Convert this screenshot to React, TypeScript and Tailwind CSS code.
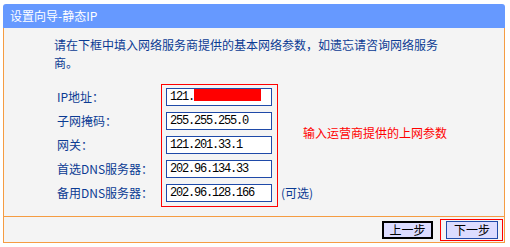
const fields = [
  { label: "IP地址：", value: "121.", masked: true },
  { label: "子网掩码：", value: "255.255.255.0" },
  { label: "网关：", value: "121.201.33.1" },
  { label: "首选DNS服务器：", value: "202.96.134.33" },
  { label: "备用DNS服务器：", value: "202.96.128.166" },
];

const cjk = "font-['SimSun','Noto_Sans_CJK_SC',sans-serif]";

export default function App() {
  return (
    <div className={`w-[510px] h-[247px] bg-white pt-[4px] pl-[3px] text-[12px] ${cjk}`}>
      <div className="w-[502px]">
        {/* header */}
        <div className="h-[24px] bg-[#6699ff] rounded-t-[3px] flex items-center pl-[7px] text-white leading-none">
          设置向导-静态IP
        </div>

        <div className="border-x border-b border-[#f59c42] bg-[#f4f4f4]">
          {/* body */}
          <div className="h-[188px] pt-[8px] text-[#0b3b93]">
            <p className="ml-[50px] w-[392px] leading-[18px]">
              请在下框中填入网络服务商提供的基本网络参数，如遗忘请咨询网络服务商。
            </p>

            <div className="flex mt-[12px] ml-[53px]">
              <div className="w-[104px] pt-[4px] flex flex-col gap-[6px]">
                {fields.map((f) => (
                  <div key={f.label} className="h-[18px] flex items-center leading-none">
                    {f.label}
                  </div>
                ))}
              </div>

              <div className="w-[117px] border border-[#ff0000] pl-[4px] pr-[5px] pt-[3px] pb-[4px] flex flex-col gap-[6px]">
                {fields.map((f) => (
                  <div
                    key={f.label}
                    className="h-[18px] bg-white border border-[#1f4aa8] pl-[3px] flex items-center text-black font-['Liberation_Mono',monospace] text-[12px] tracking-[-1.2px] leading-none"
                  >
                    <span>{f.value}</span>
                    {f.masked && <span className="self-start w-[67px] h-[12px] bg-[#ff0000]" />}
                  </div>
                ))}
              </div>

              <div className="flex flex-col justify-between pt-[40px] pb-[5px]">
                <div className="ml-[25px] leading-[18px] text-[#ff0000]">输入运营商提供的上网参数</div>
                <div className="ml-[3px] leading-[18px]">(可选)</div>
              </div>
            </div>
          </div>

          {/* footer */}
          <div className="h-[26px] border-t border-[#f59c42] flex items-center justify-end pr-[1px]">
            <button className="w-[51px] h-[18px] mr-[7px] bg-[#dcdcff] border-2 border-black text-black leading-none">
              上一步
            </button>
            <div className="w-[63px] h-[22px] border border-[#ff0000] pl-[5px] pt-[1px]">
              <button className="w-[52px] h-[18px] bg-[#dcdcff] border border-[#1f4aa8] text-black leading-none">
                下一步
              </button>
            </div>
          </div>
        </div>
      </div>
    </div>
  );
}
